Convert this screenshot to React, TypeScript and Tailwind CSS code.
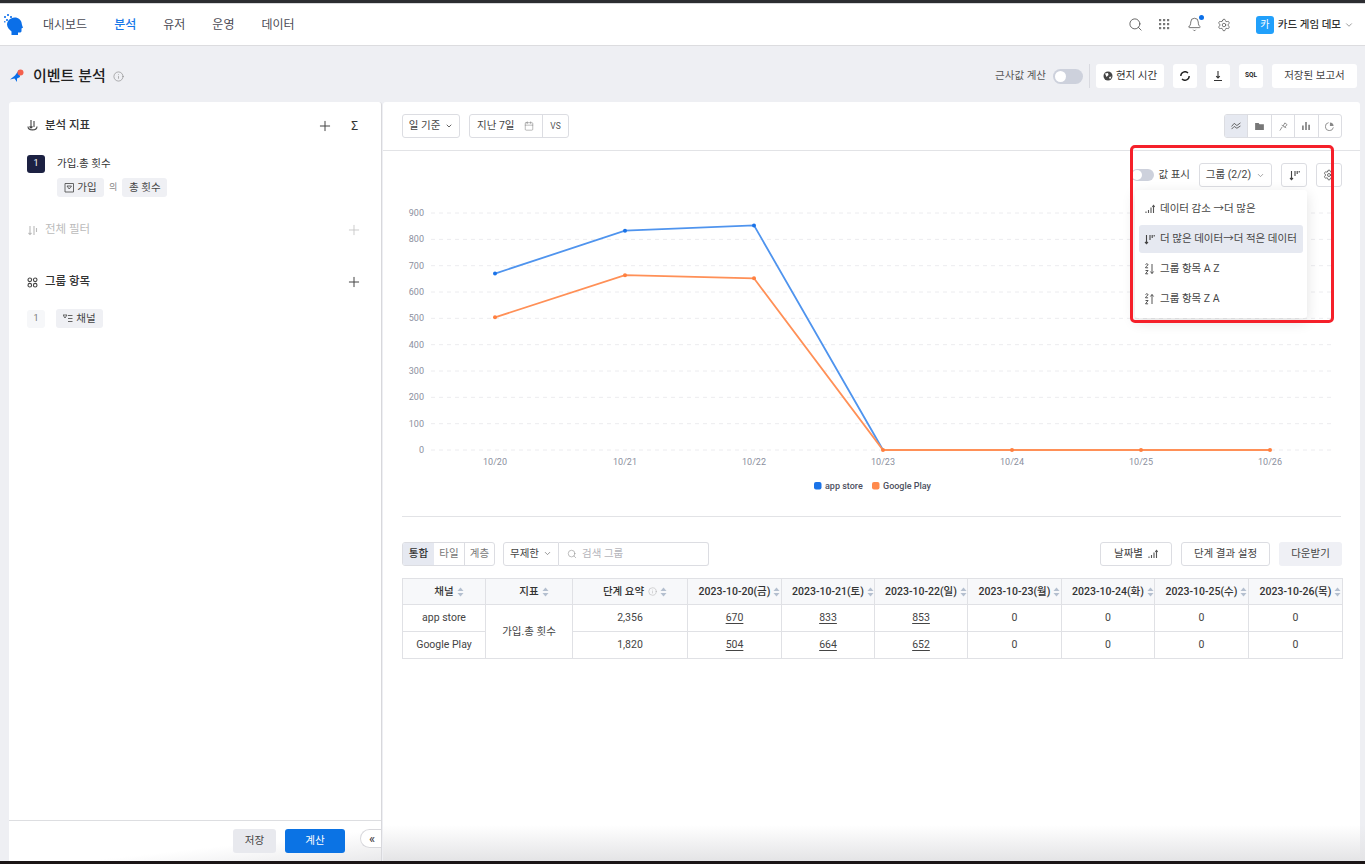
import { Bell, Calendar, ChevronDown, Info, Plus, Search, Settings } from "lucide-react";
import type { ReactNode } from "react";

const dates = ["10/20", "10/21", "10/22", "10/23", "10/24", "10/25", "10/26"];
const xs = [495, 625, 754, 883, 1012, 1141, 1270];
const appStore = [670, 833, 853, 0, 0, 0, 0];
const googlePlay = [504, 664, 652, 0, 0, 0, 0];
const yOf = (v: number) => 449 - v * 0.2633;
const points = (data: number[]) => data.map((v, i) => `${xs[i]},${yOf(v)}`).join(" ");

const cols = [83, 87, 115, 94, 93, 93, 94, 93, 94, 94];
const dayHeads = [
  "2023-10-20(금)",
  "2023-10-21(토)",
  "2023-10-22(일)",
  "2023-10-23(월)",
  "2023-10-24(화)",
  "2023-10-25(수)",
  "2023-10-26(목)",
];

function Sort() {
  return (
    <svg width="7" height="10" viewBox="0 0 7 10" className="ml-[3px] shrink-0">
      <path d="M3.5 0.5 6.5 4H.5z" fill="#b4bfcf" />
      <path d="M3.5 9.5 .5 6h6z" fill="#b4bfcf" />
    </svg>
  );
}

function BarsUp({ color = "#555" }: { color?: string }) {
  return (
    <svg width="10" height="10" viewBox="0 0 10 10" fill="none" stroke={color} strokeWidth="1.1">
      <path d="M1 9V7.5M3.5 9V6M6 9V3.5" />
      <path d="M8.5 9V1.5M7.3 3 8.5 1.5 9.7 3" />
    </svg>
  );
}

function SortDesc() {
  return (
    <svg width="11" height="11" viewBox="0 0 11 11" fill="none" stroke="#444" strokeWidth="1.1">
      <path d="M2.5 1v8.5M1 8l1.5 1.6L4 8" />
      <path d="M6 1v5M8.2 1v3M10.2 1v1.6" />
    </svg>
  );
}

function SortAlpha({ down }: { down: boolean }) {
  return (
    <svg width="11" height="12" viewBox="0 0 11 12" fill="none" stroke="#555" strokeWidth="1">
      <path d="M1.5 1.5c.5-1 2.5-1 2.5.3 0 1-2.5 1.5-2.5 3h2.6" />
      <path d="M1.5 7.5h2.6L1.5 10.800h2.600" />
      {down ? (
        <path d="M8 1v9.500M6.400 8.500 8 10.500l1.600-2" />
      ) : (
        <path d="M8 11V1.500M6.400 3.500 8 1.500l1.600 2" />
      )}
    </svg>
  );
}

function IconBox({ children }: { children: ReactNode }) {
  return (
    <div className="flex h-6 w-6 items-center justify-center rounded-[3px] bg-white text-[#222]">
      {children}
    </div>
  );
}

function MenuItem({ icon, label, active }: { icon: ReactNode; label: string; active?: boolean }) {
  return (
    <div
      className={
        active
          ? "flex h-[28px] items-center gap-[5px] rounded-[3px] bg-[#e6e9f1] pl-[5px] text-[10.5px] text-[#444]"
          : "flex h-[28px] items-center gap-[5px] rounded-[3px] pl-[5px] text-[10.5px] text-[#444]"
      }
    >
      <span className="flex w-[11px] justify-center">{icon}</span>
      {label}
    </div>
  );
}

export default function App() {
  return (
    <div className="relative flex h-[864px] w-[1365px] flex-col overflow-hidden bg-[#eeeff3] font-['Roboto','Noto_Sans_CJK_KR',sans-serif] text-[#333]">
      <div className="h-[3px] shrink-0 bg-[#2c2d31]" />
      <div className="h-px shrink-0 bg-[#d8d9dc]" />

      {/* top nav */}
      <header className="flex h-[42px] shrink-0 items-center border-b border-[#dcdcdf] bg-white pl-[3px] pr-[11px]">
        <svg width="20" height="24" viewBox="0 0 20 24">
          <path
            d="M8 5.500c5-2.500 10.500 .5 10.800 5.500.1 1.500 1.200 3 1.200 3.500s-1.200 .8-1.500 1v2.500c0 1.500-1.500 1.700-3.500 1.500v2.500H8.500v-3.500C6.500 16.500 4 14.500 4 11.500c0-2.500 1.500-4.800 4-6z"
            fill="#0b6fe8"
          />
          <g fill="#3d8cf0">
            <rect x="1" y="3" width="2" height="2" />
            <rect x="4" y="1" width="2" height="2" />
            <rect x="7" y="3" width="2" height="2" />
            <rect x="3" y="6" width="2" height="2" />
            <rect x="1" y="8" width="1.500" height="1.500" />
          </g>
        </svg>
        <nav className="ml-[20px] flex gap-[27px] text-[12px] text-[#4b4b55]">
          <span>대시보드</span>
          <span className="font-medium text-[#1677e8]">분석</span>
          <span>유저</span>
          <span>운영</span>
          <span>데이터</span>
        </nav>
        <div className="ml-auto flex items-center text-[#555]">
          <Search size={15} strokeWidth={1.4} />
          <svg width="13" height="13" viewBox="0 0 13 13" fill="#777" className="ml-[15px]">
            {[1, 5, 9].map((y) =>
              [1, 5, 9].map((x) => <rect key={`${x}-${y}`} x={x} y={y} width="2.200" height="2.200" />)
            )}
          </svg>
          <div className="relative ml-[16px]">
            <Bell size={15} strokeWidth={1.3} />
            <span className="absolute -right-[2px] -top-[2px] h-[5px] w-[5px] rounded-full bg-[#0b6fe8]" />
          </div>
          <Settings size={14} strokeWidth={1.3} className="ml-[15px]" />
          <div className="ml-[25px] flex h-[18px] w-[18px] items-center justify-center rounded-[3px] bg-[#21a0fb] text-[10px] text-white">
            카
          </div>
          <span className="ml-[4px] text-[10.5px] font-medium text-[#333]">카드 게임 데모</span>
          <ChevronDown size={10} className="ml-[3px] text-[#888]" />
        </div>
      </header>

      {/* title row */}
      <div className="flex h-[56px] shrink-0 items-center pl-[10px] pr-[8px] pt-[4px]">
        <svg width="14" height="14" viewBox="0 0 14 14">
          <path d="M0 10.500 5 6.500 9 1 10 8 7 9.500 7 13 4.500 9.500z" fill="#0b6fe8" />
          <circle cx="10.500" cy="3.500" r="3" fill="#f4604c" />
        </svg>
        <h1 className="ml-[9px] text-[15px] font-medium text-[#222]">이벤트 분석</h1>
        <Info size={11} strokeWidth={1.2} className="ml-[7px] text-[#777]" />
        <div className="ml-auto flex items-center">
          <span className="text-[10.500px] text-[#555]">근사값 계산</span>
          <div className="ml-[7px] flex h-[15px] w-[30px] items-center rounded-full bg-[#cdd1dc] pl-[2px]">
            <span className="h-[11px] w-[11px] rounded-full bg-white" />
          </div>
          <div className="ml-[6px] h-[24px] w-px bg-[#d9dae0]" />
          <div className="ml-[6px] flex h-6 w-[68px] items-center justify-center gap-[3px] rounded-[3px] bg-white text-[10.500px] text-[#333]">
            <svg width="10" height="10" viewBox="0 0 10 10">
              <circle cx="5" cy="5" r="4.500" fill="#444" />
              <path d="M2 2.500 5 2l.5 2L3.500 6zM6 6l2.500-.5L7 8.500z" fill="#fff" />
            </svg>
            현지 시간
          </div>
          <div className="ml-[9px]">
            <IconBox>
              <svg width="10" height="10" viewBox="0 0 10 10" fill="none" stroke="#222" strokeWidth="1.400">
                <path d="M.8 5a4.200 4.200 0 0 1 7.200-3M9.200 5A4.200 4.200 0 0 1 2 8" />
              </svg>
            </IconBox>
          </div>
          <div className="ml-[9px]">
            <IconBox>
              <svg width="8" height="10" viewBox="0 0 8 10" fill="none" stroke="#333" strokeWidth="1.100">
                <path d="M4 0v7M2.200 5.200 4 7l1.800-1.800M0 9.500h8" />
              </svg>
            </IconBox>
          </div>
          <div className="ml-[9px]">
            <IconBox>
              <span className="text-[6.500px] font-bold">SQL</span>
            </IconBox>
          </div>
          <div className="ml-[9px] flex h-6 w-[85px] items-center justify-center rounded-[3px] bg-white text-[10.500px] text-[#444]">
            저장된 보고서
          </div>
        </div>
      </div>

      <main className="flex min-h-0 flex-1 pb-[3px] pl-[9px] pr-[5px]">
        {/* left panel */}
        <aside className="flex w-[373px] shrink-0 flex-col rounded-t-[3px] border-r border-[#d8d8dc] bg-white">
          <div className="flex-1 pl-[18px] pr-[19px] pt-[15px]">
            <div className="flex h-[18px] items-center">
              <svg width="11" height="12" viewBox="0 0 11 12" fill="none" stroke="#444" strokeWidth="1.100">
                <path d="M4 0v8M2.500 6.500 4 8l1.500-1.500M7 1v6M1 6.500C1 11 10 11 10 6.500" />
              </svg>
              <span className="ml-[7px] text-[11.500px] font-medium text-[#333]">분석 지표</span>
              <Plus size={16} strokeWidth={1.500} className="ml-auto text-[#444]" />
              <span className="ml-[18px] mr-[4px] text-[12px] leading-none text-[#333]">Σ</span>
            </div>

            <div className="mt-[20px] flex">
              <div className="flex h-[18px] w-[18px] items-center justify-center rounded-[3px] bg-[#1c2142] text-[9px] text-white">
                1
              </div>
              <div className="ml-[12px]">
                <div className="flex h-[18px] items-center text-[10.500px] text-[#333]">가입.총 횟수</div>
                <div className="mt-[5px] flex items-center text-[10.500px]">
                  <span className="flex h-[19px] w-[47px] items-center justify-center gap-[3px] rounded-[3px] bg-[#eff0f4] text-[#444]">
                    <svg width="10" height="10" viewBox="0 0 10 10" fill="none" stroke="#555" strokeWidth=".9">
                      <path d="M1 .5h8.500v8.500H1zM3 3h4.500L5.200 6z" />
                    </svg>
                    가입
                  </span>
                  <span className="mx-[5px] text-[9px] text-[#888]">의</span>
                  <span className="flex h-[19px] w-[45px] items-center justify-center rounded-[3px] bg-[#eff0f4] text-[#444]">
                    총 횟수
                  </span>
                </div>
              </div>
            </div>

            <div className="mt-[24px] flex h-[18px] items-center text-[#bbb]">
              <svg width="11" height="11" viewBox="0 0 11 11" fill="none" stroke="#bbb" strokeWidth="1.100">
                <path d="M3 1v8.500M1.500 8 3 9.500 4.500 8M7 1v9M9.500 3v4" />
              </svg>
              <span className="ml-[7px] text-[11.500px]">전체 필터</span>
              <Plus size={16} strokeWidth={1.300} className="ml-auto text-[#c4c4c4]" />
            </div>

            <div className="mt-[34px] flex h-[18px] items-center">
              <svg width="11" height="11" viewBox="0 0 11 11" fill="none" stroke="#444" strokeWidth="1.100">
                <circle cx="2.800" cy="2.800" r="1.800" />
                <circle cx="8.200" cy="2.800" r="1.800" />
                <circle cx="2.800" cy="8.200" r="1.800" />
                <circle cx="8.200" cy="8.200" r="1.800" />
              </svg>
              <span className="ml-[7px] text-[11.500px] font-medium text-[#333]">그룹 항목</span>
              <Plus size={16} strokeWidth={1.500} className="ml-auto text-[#444]" />
            </div>

            <div className="mt-[18px] flex items-center">
              <div className="flex h-[18px] w-[18px] items-center justify-center rounded-[3px] bg-[#f6f7f9] text-[9px] text-[#777]">
                1
              </div>
              <span className="ml-[11px] flex h-[19px] w-[47px] items-center justify-center gap-[3px] rounded-[3px] bg-[#eff0f4] text-[10.500px] text-[#444]">
                <svg width="10" height="9" viewBox="0 0 10 9" fill="none" stroke="#555" strokeWidth=".9">
                  <path d="M0 1h4L2 4zM5 1.500h4.500M5 4.500h4.500M5 7.500h4.500" />
                </svg>
                채널
              </span>
            </div>
          </div>

          <div className="flex h-[41px] shrink-0 items-start justify-end border-t border-[#dddee1] bg-gradient-to-br from-white from-60% to-[#e9e9eb] pt-[8px]">
            <div className="flex h-6 w-[43px] items-center justify-center rounded-[3px] bg-[#e8e9ee] text-[10.500px] text-[#444]">
              저장
            </div>
            <div className="ml-[9px] flex h-6 w-[60px] items-center justify-center rounded-[3px] bg-[#0b73e4] text-[10.500px] text-white">
              계산
            </div>
            <div className="ml-[15px] flex h-[19px] w-[21px] items-center justify-center rounded-l-full border border-r-0 border-[#d8d8dc] bg-white pl-[2px] text-[13px] leading-none text-[#333]">
              «
            </div>
          </div>
        </aside>

        {/* right panel */}
        <section className="ml-px min-w-0 flex-1 rounded-t-[3px] bg-white">
          <div className="flex h-[49px] items-center border-b border-[#e2e3e6] pl-[19px] pr-[18px]">
            <div className="flex h-6 w-[58px] items-center justify-center gap-[5px] rounded-[3px] border border-[#dcdde2] text-[10.500px] text-[#444]">
              일 기준
              <ChevronDown size={8} strokeWidth={2.500} />
            </div>
            <div className="ml-[9px] flex h-6 items-center rounded-[3px] border border-[#dcdde2] text-[10.500px] text-[#444]">
              <div className="flex h-full w-[73px] items-center justify-between border-r border-[#dcdde2] pl-[7px] pr-[8px]">
                지난 7일
                <Calendar size={10} strokeWidth={1.200} className="text-[#777]" />
              </div>
              <div className="flex w-[25px] justify-center text-[8.500px] text-[#555]">VS</div>
            </div>
            <div className="ml-auto flex h-6 w-[118px] overflow-hidden rounded-[3px] border border-[#dcdde2]">
              <div className="flex flex-1 items-center justify-center border-r border-[#dcdde2] bg-[#e6e9f1]">
                <svg width="10" height="8" viewBox="0 0 11 9" fill="none" stroke="#555" strokeWidth="1">
                  <path d="M.5 5 3.500 1.500 6.500 4 10.500 1M.5 8 3.500 5 6.500 7l4-2.500" />
                </svg>
              </div>
              <div className="flex flex-1 items-center justify-center border-r border-[#dcdde2]">
                <svg width="9" height="7" viewBox="0 0 10 8" fill="#777">
                  <path d="M0 0h4l1 1.500h5V8H0z" />
                </svg>
              </div>
              <div className="flex flex-1 items-center justify-center border-r border-[#dcdde2]">
                <svg width="9" height="9" viewBox="0 0 10 10" fill="none" stroke="#888" strokeWidth="1">
                  <path d="M1 9.500 3.500 5.500M3 3.500 8 6.500M4.500 4.500 6.500 1l2.500 2-3 3" />
                </svg>
              </div>
              <div className="flex flex-1 items-center justify-center border-r border-[#dcdde2]">
                <svg width="8" height="8" viewBox="0 0 9 9" fill="#888">
                  <path d="M0 4h2v5H0zM3.500 0h2v9h-2zM7 3h2v6H7z" />
                </svg>
              </div>
              <div className="flex flex-1 items-center justify-center">
                <svg width="9" height="9" viewBox="0 0 10 10" fill="none" stroke="#888" strokeWidth="1">
                  <path d="M9.300 6A4.500 4.500 0 1 1 4 .7" />
                  <path d="M5.500 .5A4.200 4.200 0 0 1 9.500 4.500H5.500z" fill="#888" stroke="none" />
                </svg>
              </div>
            </div>
          </div>

          <div className="mt-[12px] flex h-6 items-center justify-end pr-[18px]">
            <div className="flex h-[12px] w-[23px] items-center rounded-full bg-[#cdd1dc] pl-[1px]">
              <span className="h-[10px] w-[10px] rounded-full bg-white" />
            </div>
            <span className="ml-[4px] text-[10.500px] text-[#444]">값 표시</span>
            <div className="ml-[9px] flex h-6 w-[73px] items-center justify-center gap-[5px] rounded-[3px] border border-[#dcdde2] text-[10.500px] text-[#444]">
              그룹 (2/2)
              <ChevronDown size={9} className="text-[#888]" />
            </div>
            <div className="ml-[9px] flex h-6 w-[26px] items-center justify-center rounded-[3px] border border-[#dcdde2]">
              <SortDesc />
            </div>
            <div className="ml-[9px] flex h-6 w-[26px] items-center justify-center rounded-[3px] border border-[#dcdde2]">
              <Settings size={12} strokeWidth={1.500} className="text-[#444]" />
            </div>
          </div>

          <svg viewBox="383 186 977 329" className="block h-[329px] w-[977px]">
            {[0, 100, 200, 300, 400, 500, 600, 700, 800, 900].map((v) => (
              <g key={v}>
                <text x="424" y={yOf(v) + 3} textAnchor="end" fontSize="9" fill="#8b8f9e">
                  {v}
                </text>
                <line x1="431" x2="1335" y1={yOf(v)} y2={yOf(v)} stroke="#ececef" strokeDasharray="4 4" strokeWidth="1" />
              </g>
            ))}
            {dates.map((d, i) => (
              <text key={d} x={xs[i]} y="464" textAnchor="middle" fontSize="9" fill="#8b8f9e">
                {d}
              </text>
            ))}
            <polyline points={points(appStore)} fill="none" stroke="#4f94ee" strokeWidth="1.800" />
            <polyline points={points(googlePlay)} fill="none" stroke="#ff9057" strokeWidth="1.800" />
            {appStore.slice(0, 3).map((v, i) => (
              <circle key={i} cx={xs[i]} cy={yOf(v)} r="2" fill="#1a73e8" />
            ))}
            {googlePlay.map((v, i) => (
              <circle key={i} cx={xs[i]} cy={yOf(v)} r="2" fill="#ff8040" />
            ))}
            <rect x="814" y="481" width="7.500" height="7.500" rx="2" fill="#1a73e8" />
            <text x="825" y="488" fontSize="9" fontWeight="500" fill="#4d5060">
              app store
            </text>
            <rect x="872" y="481" width="7.500" height="7.500" rx="2" fill="#ff8a4c" />
            <text x="883" y="488" fontSize="9" fontWeight="500" fill="#4d5060">
              Google Play
            </text>
          </svg>

          <div className="mx-[19px] h-px bg-[#e2e3e6]" />

          <div className="mt-[24px] flex h-[25px] items-center pl-[19px] pr-[18px]">
            <div className="flex h-6 w-[93px] overflow-hidden rounded-[3px] border border-[#dcdde2] text-[10.500px]">
              <div className="flex w-[31px] items-center justify-center bg-[#e6e9f1] font-medium text-[#333]">통합</div>
              <div className="flex w-[31px] items-center justify-center border-r border-[#dcdde2] text-[#777]">타일</div>
              <div className="flex flex-1 items-center justify-center text-[#777]">계층</div>
            </div>
            <div className="ml-[8px] flex h-6 w-[56px] items-center justify-center gap-[4px] rounded-l-[3px] border border-[#dcdde2] text-[10.500px] text-[#444]">
              무제한
              <ChevronDown size={9} className="text-[#777]" />
            </div>
            <div className="flex h-[24px] w-[150px] items-center rounded-r-[3px] border border-l-0 border-[#dcdde2] pl-[8px] text-[10.500px] text-[#b5b5bb]">
              <Search size={10} strokeWidth={1.300} className="text-[#888]" />
              <span className="ml-[5px]">검색 그룹</span>
            </div>
            <div className="ml-auto flex h-6 w-[72px] items-center justify-center gap-[5px] rounded-[3px] border border-[#dcdde2] text-[10.500px] text-[#444]">
              날짜별
              <BarsUp />
            </div>
            <div className="ml-[9px] flex h-6 w-[89px] items-center justify-center rounded-[3px] border border-[#dcdde2] text-[10.500px] text-[#444]">
              단계 결과 설정
            </div>
            <div className="ml-[9px] flex h-6 w-[63px] items-center justify-center rounded-[3px] bg-[#eff0f5] text-[10.500px] text-[#444]">
              다운받기
            </div>
          </div>

          <div className="mt-[12px] pl-[19px]">
            <table className="w-[940px] table-fixed border-collapse text-center text-[10.500px] text-[#444]">
              <colgroup>
                {cols.map((w, i) => (
                  <col key={i} style={{ width: w }} />
                ))}
              </colgroup>
              <thead>
                <tr className="h-[26px] bg-[#f7f8fa] font-medium text-[#333]">
                  {["채널", "지표"].map((h) => (
                    <th key={h} className="border border-[#e0e1e5] p-0 font-medium">
                      <span className="flex items-center justify-center pl-[10px]">
                        {h}
                        <Sort />
                      </span>
                    </th>
                  ))}
                  <th className="border border-[#e0e1e5] p-0 font-medium">
                    <span className="flex items-center justify-center pl-[10px]">
                      단계 요약
                      <Info size={9} strokeWidth={1} className="ml-[4px] text-[#999]" />
                      <Sort />
                    </span>
                  </th>
                  {dayHeads.map((h) => (
                    <th key={h} className="whitespace-nowrap border border-[#e0e1e5] p-0 font-medium">
                      <span className="flex items-center justify-center pl-[10px]">
                        {h}
                        <Sort />
                      </span>
                    </th>
                  ))}
                </tr>
              </thead>
              <tbody>
                {[
                  { name: "app store", total: "2,356", vals: appStore },
                  { name: "Google Play", total: "1,820", vals: googlePlay },
                ].map((r, i) => (
                  <tr key={r.name} className="h-[27px]">
                    <td className="border border-[#e0e1e5] p-0">{r.name}</td>
                    {i === 0 && (
                      <td rowSpan={2} className="border border-[#e0e1e5] p-0">
                        가입.총 횟수
                      </td>
                    )}
                    <td className="border border-[#e0e1e5] p-0">{r.total}</td>
                    {r.vals.map((v, j) => (
                      <td key={j} className="border border-[#e0e1e5] p-0">
                        {v > 0 ? <span className="underline underline-offset-2">{v}</span> : v}
                      </td>
                    ))}
                  </tr>
                ))}
              </tbody>
            </table>
          </div>
        </section>
      </main>

      {/* sort dropdown */}
      <div className="absolute left-[1135px] top-[190px] flex h-[128px] w-[172px] flex-col justify-center gap-[2px] rounded-[3px] bg-white px-[4px] shadow-[0_4px_14px_rgba(0,0,0,0.12)]">
        <MenuItem icon={<BarsUp />} label="데이터 감소 →더 많은" />
        <MenuItem icon={<SortDesc />} label="더 많은 데이터→더 적은 데이터" active />
        <MenuItem icon={<SortAlpha down />} label="그룹 항목 A Z" />
        <MenuItem icon={<SortAlpha down={false} />} label="그룹 항목 Z A" />
      </div>

      {/* red annotation */}
      <div className="pointer-events-none absolute left-[1130px] top-[145px] h-[178px] w-[204px] rounded-[5px] border-[3px] border-[#f5202a]" />

      {/* bottom fade and screen edge */}
      <div className="pointer-events-none absolute bottom-[3px] left-[383px] right-0 h-[36px] bg-gradient-to-b from-transparent to-[#e4e4e6]" />
      <div className="absolute bottom-0 left-0 right-0 h-[3px] bg-[#1b1516]" />
    </div>
  );
}
